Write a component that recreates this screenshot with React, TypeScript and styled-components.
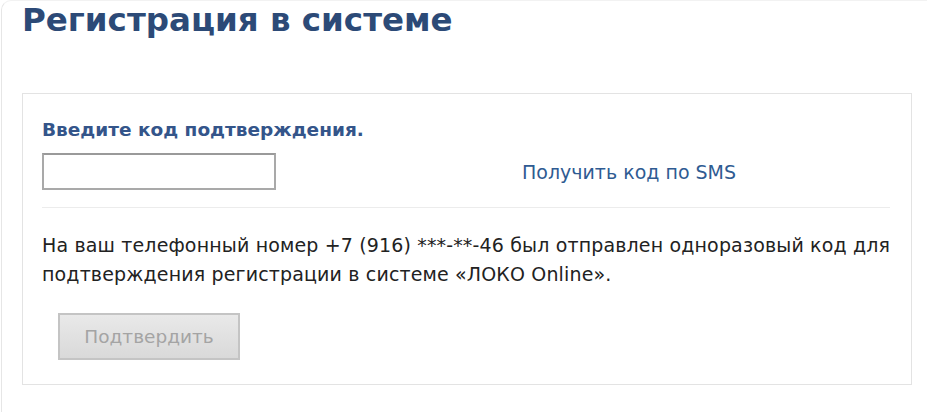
import styled, { createGlobalStyle } from 'styled-components'

const GlobalStyle = createGlobalStyle`
  html, body {
    margin: 0;
    padding: 0;
    background: #fff;
  }
  body {
    font-family: "DejaVu Sans", Verdana, sans-serif;
  }
`

const Page = styled.div`
  box-sizing: border-box;
  min-height: 412px;
  margin-left: 1px;
  padding: 0 0 0 20px;
  border-left: 1px solid #e6e6e6;
  border-top: 1px solid #f2f2f2;
  border-top-left-radius: 10px;
`

const Title = styled.h1`
  margin: 0;
  font-size: 32.5px;
  line-height: 38px;
  font-weight: bold;
  color: #2c4a77;
`

const Card = styled.div`
  box-sizing: border-box;
  width: 890px;
  margin-top: 54px;
  padding: 24px 21px 24px 19px;
  border: 1px solid #e3e3e3;
`

const Label = styled.div`
  font-size: 18.5px;
  line-height: 24px;
  font-weight: bold;
  color: #34558a;
`

const CodeRow = styled.div`
  display: flex;
  align-items: center;
  margin-top: 11px;
  padding-bottom: 17px;
  border-bottom: 1px solid #ececec;
`

const CodeInput = styled.input`
  box-sizing: border-box;
  width: 234px;
  height: 37px;
  margin: 0;
  border: 2px solid #a9a9a9;
  border-top-color: #9a9a9a;
  background: #fff;
  font-size: 16px;
  outline: none;
`

const SmsLink = styled.a`
  margin-left: 246px;
  font-size: 19px;
  color: #2f5b92;
  text-decoration: none;
  cursor: pointer;
`

const Notice = styled.p`
  margin: 23px -10px 0 0;
  font-size: 19px;
  line-height: 29px;
  letter-spacing: 0.15px;
  color: #222;
`

const SubmitButton = styled.button`
  box-sizing: border-box;
  width: 182px;
  height: 47px;
  margin: 24px 0 0 16px;
  border: 2px solid #c4c4c4;
  background: linear-gradient(#e9e9e9, #d9d9d9);
  font-family: "DejaVu Sans", Verdana, sans-serif;
  font-size: 18.5px;
  color: #a4a4a4;
  cursor: default;
`

function App(): JSX.Element {
  return (
    <>
      <GlobalStyle />
      <Page>
        <Title>Регистрация в системе</Title>
        <Card>
          <Label>Введите код подтверждения.</Label>
          <CodeRow>
            <CodeInput type="text" />
            <SmsLink>Получить код по SMS</SmsLink>
          </CodeRow>
          <Notice>
            На ваш телефонный номер +7 (916) ***-**-46 был отправлен одноразовый код для
            подтверждения регистрации в системе «ЛОКО Online».
          </Notice>
          <SubmitButton disabled>Подтвердить</SubmitButton>
        </Card>
      </Page>
    </>
  )
}

export default App
